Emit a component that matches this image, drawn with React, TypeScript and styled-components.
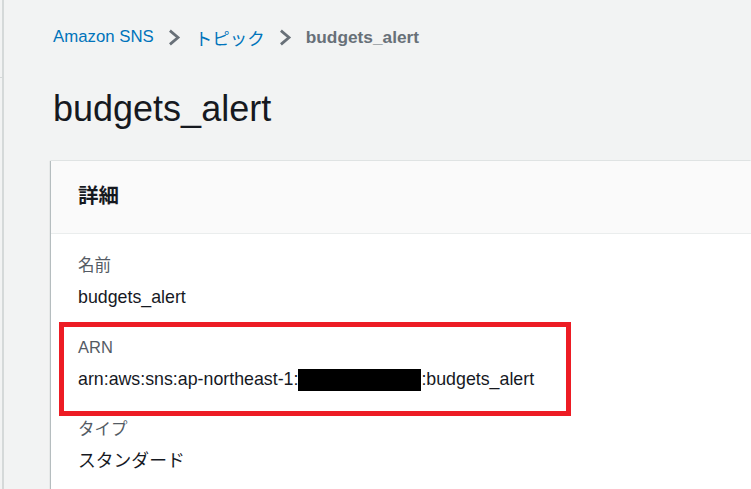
import React from 'react';
import styled, { createGlobalStyle } from 'styled-components';

const GlobalStyle = createGlobalStyle`
  html, body {
    margin: 0;
    padding: 0;
    background: #f2f3f3;
    overflow: hidden;
  }
  body {
    font-family: "Liberation Sans", "Noto Sans CJK JP", sans-serif;
    color: #16191f;
  }
`;

const Page = styled.div`
  position: relative;
  display: flex;
  flex-direction: column;
  height: 489px;
  margin-left: 2px;
  border-left: 2px solid #d5d9d9;
  padding: 26px 0 0 47px;
  box-sizing: border-box;

  &::before {
    content: '';
    position: absolute;
    left: -4px;
    top: 77px;
    width: 2px;
    height: 1px;
    background: #d5d9d9;
  }
`;

const Breadcrumbs = styled.nav`
  display: flex;
  align-items: center;
  gap: 14px;
  height: 22px;
  padding-left: 2px;
  font-size: 16.8px;
`;

const Crumb = styled.span<{ $current?: boolean; $jp?: boolean }>`
  color: ${(p) => (p.$current ? '#687078' : '#0073bb')};
  font-weight: ${(p) => (p.$current ? 700 : 400)};
  font-family: ${(p) =>
    p.$jp ? '"Noto Sans CJK JP", sans-serif' : '"Liberation Sans", sans-serif'};
  font-size: ${(p) => (p.$jp ? '17.5px' : p.$current ? '17.3px' : '16.8px')};
  white-space: nowrap;
`;

const Chevron = () => (
  <svg width="13" height="17" viewBox="0 0 13 17">
    <polyline
      points="3,2.5 10,8.5 3,14.5"
      fill="none"
      stroke="#687078"
      strokeWidth="2.8"
      strokeLinecap="square"
    />
  </svg>
);

const Title = styled.h1`
  margin: 41px 0 0 2px;
  font-size: 36px;
  font-weight: 400;
  line-height: 40px;
  color: #16191f;
`;

const Card = styled.section`
  position: relative;
  flex: 1;
  margin-top: 32px;
  background: #fff;
  box-shadow: -1px 0 1px rgba(0, 28, 36, 0.25), 0 -1px 0 #eaeded;
`;

const CardHeader = styled.header`
  display: flex;
  align-items: center;
  height: 73px;
  box-sizing: border-box;
  padding: 0 0 6px 27px;
  background: #fafafa;
  border-bottom: 1px solid #eaeded;
  font-family: "Noto Sans CJK JP", sans-serif;
  font-size: 20.5px;
  font-weight: 700;
  color: #16191f;
`;

const CardBody = styled.div`
  display: flex;
  flex-direction: column;
  gap: 24px;
  padding: 19px 0 0 27px;
`;

const Field = styled.div`
  display: flex;
  flex-direction: column;
  gap: 6px;
`;

const Label = styled.div`
  font-size: 16.5px;
  line-height: 24px;
  color: #545b64;
`;

const Value = styled.div`
  font-size: 17.8px;
  line-height: 28px;
  color: #16191f;
  white-space: nowrap;
`;

const Redacted = styled.span`
  display: inline-block;
  width: 123px;
  height: 22px;
  background: #000;
  vertical-align: -6px;
`;

const Highlight = styled.div`
  position: absolute;
  left: 8px;
  top: 161px;
  width: 512px;
  height: 94px;
  border: 5px solid #ed1c24;
  box-sizing: border-box;
  pointer-events: none;
`;

export default function App() {
  return (
    <>
      <GlobalStyle />
      <Page>
        <Breadcrumbs>
          <Crumb>Amazon SNS</Crumb>
          <Chevron />
          <Crumb $jp>トピック</Crumb>
          <Chevron />
          <Crumb $current>budgets_alert</Crumb>
        </Breadcrumbs>
        <Title>budgets_alert</Title>
        <Card>
          <CardHeader>詳細</CardHeader>
          <CardBody>
            <Field>
              <Label>名前</Label>
              <Value>budgets_alert</Value>
            </Field>
            <Field>
              <Label>ARN</Label>
              <Value>
                arn:aws:sns:ap-northeast-1:<Redacted />:budgets_alert
              </Value>
            </Field>
            <Field>
              <Label>タイプ</Label>
              <Value>スタンダード</Value>
            </Field>
          </CardBody>
          <Highlight />
        </Card>
      </Page>
    </>
  );
}
